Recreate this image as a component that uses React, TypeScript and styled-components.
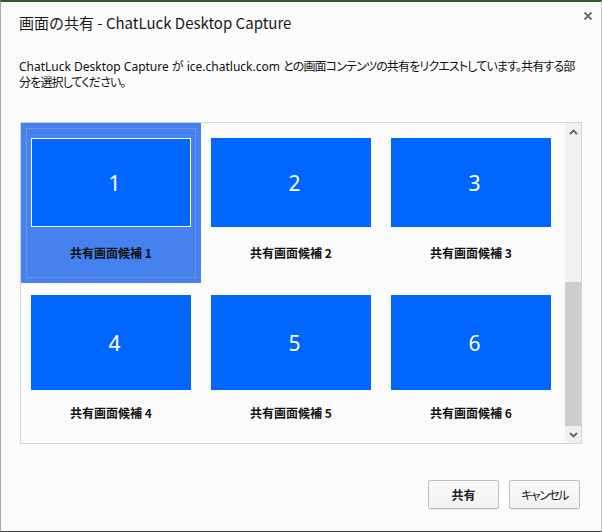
import React from "react";
import styled, { createGlobalStyle } from "styled-components";

const Global = createGlobalStyle`
  html, body { margin: 0; padding: 0; background: #fbfbfb; }
  * { box-sizing: border-box; }
`;

const FONT = `"Noto Sans CJK JP", "Noto Sans", "Liberation Sans", sans-serif`;
const MIXED = `"Noto Sans", "Noto Sans CJK JP", "Liberation Sans", sans-serif`;

const Window = styled.div`
  width: 602px;
  height: 532px;
  background: #fbfbfb;
  border-top: 2px solid #2c5a2c;
  border-left: 1px solid #a9a9a9;
  border-right: 1px solid #c4c4c4;
  border-bottom: 1px solid #3c3c3c;
  display: flex;
  flex-direction: column;
  font-family: ${FONT};
  color: #000;
`;

const Header = styled.div`
  height: 42px;
  display: flex;
  align-items: flex-start;
  justify-content: space-between;
  padding-left: 18px;
`;

const Title = styled.div`
  margin-top: 11px;
  font-size: 15px;
  line-height: 20px;
  color: #1a1a1a;
`;

const Close = styled.div`
  margin-top: 9px;
  margin-right: 8px;
  width: 10px;
  height: 10px;
  display: flex;
`;

const Description = styled.div`
  margin-top: 15px;
  padding-left: 18px;
  font-family: ${MIXED};
  font-feature-settings: "palt";
  font-size: 12px;
  line-height: 16px;
  color: #111;
  white-space: nowrap;
`;

const Jp = styled.span`
  letter-spacing: -0.85px;
`;

const ListBox = styled.div`
  margin-top: 31px;
  margin-left: 19px;
  width: 562px;
  height: 322px;
  border: 1px solid #d4d4d4;
  background: #fbfbfb;
  display: flex;
`;

const Grid = styled.div`
  width: 540px;
  display: grid;
  grid-template-columns: repeat(3, 180px);
  grid-template-rows: repeat(2, 160px);
`;

const Cell = styled.div<{ $selected?: boolean }>`
  position: relative;
  display: flex;
  flex-direction: column;
  align-items: center;
  background: ${(p) => (p.$selected ? "#4682ef" : "transparent")};
`;

const Focus = styled.div`
  position: absolute;
  inset: 5px;
  border: 1px dotted #9aa6b8;
`;

const ThumbArea = styled.div`
  height: 119px;
  width: 100%;
  display: flex;
  align-items: center;
  justify-content: center;
`;

const Thumb = styled.div<{ $h: number; $selected?: boolean }>`
  width: 160px;
  height: ${(p) => p.$h}px;
  background: #0066ff;
  border: ${(p) => (p.$selected ? "1px solid #ffffff" : "none")};
  display: flex;
  align-items: center;
  justify-content: center;
  padding-left: 7px;
  color: #fff;
  font-family: "Noto Sans", "Open Sans", sans-serif;
  font-size: 21px;
`;

const Label = styled.div`
  margin-top: 3px;
  font-size: 12px;
  line-height: 16px;
  font-weight: 700;
  color: #111;
`;

const Scrollbar = styled.div`
  margin-left: 4px;
  width: 16px;
  background: #f0f0f0;
  display: flex;
  flex-direction: column;
`;

const Arrow = styled.div`
  height: 17px;
  display: flex;
  align-items: center;
  justify-content: center;
`;

const Track = styled.div`
  flex: 1;
  display: flex;
  flex-direction: column;
  justify-content: flex-end;
`;

const Thumbbar = styled.div`
  height: 144px;
  background: #cdcdcd;
`;

const Buttons = styled.div`
  margin-top: 36px;
  display: flex;
  justify-content: flex-end;
  gap: 10px;
  padding-right: 21px;
`;

const Button = styled.button<{ $primary?: boolean }>`
  width: 71px;
  height: 29px;
  border: 1px solid #bdbdbd;
  border-radius: 2px;
  background: linear-gradient(#fafafa, #f1f1f1);
  box-shadow: 0 1px 0 rgba(0, 0, 0, 0.06);
  font-family: ${FONT};
  font-feature-settings: "palt";
  font-size: 12px;
  font-weight: ${(p) => (p.$primary ? 700 : 400)};
  letter-spacing: ${(p) => (p.$primary ? "0" : "-1.5px")};
  color: #222;
  padding: 0;
`;

const items = [
  { n: 1, h: 89 },
  { n: 2, h: 89 },
  { n: 3, h: 89 },
  { n: 4, h: 95 },
  { n: 5, h: 95 },
  { n: 6, h: 95 },
];

export default function App() {
  return (
    <>
      <Global />
      <Window>
        <Header>
          <Title>画面の共有 - ChatLuck Desktop Capture</Title>
          <Close>
            <svg width="10" height="10" viewBox="0 0 10 10">
              <path d="M1.5 1.5 L8.5 8.5 M8.5 1.5 L1.5 8.5" stroke="#6e6e6e" strokeWidth="2" />
            </svg>
          </Close>
        </Header>
        <Description>
          ChatLuck Desktop Capture が ice.chatluck.com{" "}
          <Jp>との画面コンテンツの共有をリクエストしています。共有する部</Jp>
          <br />
          <Jp>分を選択してください。</Jp>
        </Description>
        <ListBox>
          <Grid>
            {items.map((it) => {
              const sel = it.n === 1;
              return (
                <Cell key={it.n} $selected={sel}>
                  {sel && <Focus />}
                  <ThumbArea>
                    <Thumb $h={it.h} $selected={sel}>
                      {it.n}
                    </Thumb>
                  </ThumbArea>
                  <Label>共有画面候補 {it.n}</Label>
                </Cell>
              );
            })}
          </Grid>
          <Scrollbar>
            <Arrow>
              <svg width="9" height="6" viewBox="0 0 9 6">
                <path d="M1 5 L4.5 1.5 L8 5" stroke="#606060" strokeWidth="1.8" fill="none" />
              </svg>
            </Arrow>
            <Track>
              <Thumbbar />
            </Track>
            <Arrow>
              <svg width="9" height="6" viewBox="0 0 9 6">
                <path d="M1 1 L4.5 4.5 L8 1" stroke="#606060" strokeWidth="1.8" fill="none" />
              </svg>
            </Arrow>
          </Scrollbar>
        </ListBox>
        <Buttons>
          <Button $primary>共有</Button>
          <Button>キャンセル</Button>
        </Buttons>
      </Window>
    </>
  );
}
